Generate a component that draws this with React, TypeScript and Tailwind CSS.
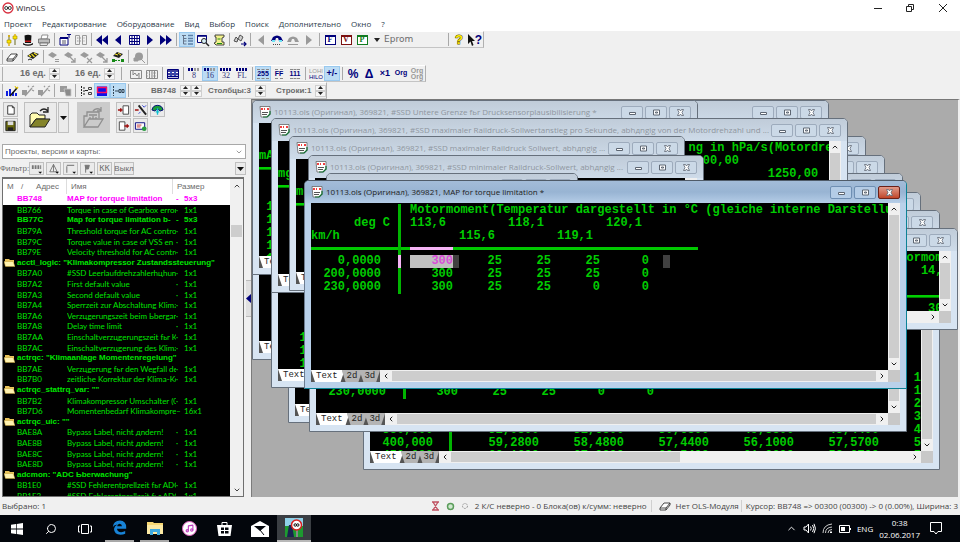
import type { ReactNode } from 'react'
import { ChevronDown, ChevronUp, ChevronLeft, ChevronRight, Search, Music } from 'lucide-react'

const menuItems = ['Проект', 'Редактирование', 'Оборудование', 'Вид', 'Выбор', 'Поиск', 'Дополнительно', 'Окно', '?']

type Row = { addr?: string; name: string; size?: string; mark?: string; bold?: boolean; selected?: boolean; group?: boolean }

const rows: Row[] = [
  { addr: 'BB748', name: 'MAP for torque limitation', size: '5x3', mark: '-', bold: true, selected: true },
  { addr: 'BB766', name: 'Torque in case of Gearbox error', size: '1x1' },
  { addr: 'BB77C', name: 'Map for torque limitation b-', size: '5x3', mark: '-', bold: true },
  { addr: 'BB79A', name: 'Threshold torque for AC control', size: '1x1' },
  { addr: 'BB79C', name: 'Torque value in case of VSS en', size: '1x1' },
  { addr: 'BB79E', name: 'Velocity threshold for AC control', size: '1x1' },
  { group: true, name: 'acctl_logic: "Klimakompressor Zustandssteuerung"' },
  { addr: 'BB7A0', name: '#SSD Leerlaufdrehzahlerhцhun', size: '1x1' },
  { addr: 'BB7A2', name: 'First default value', size: '1x1' },
  { addr: 'BB7A3', name: 'Second default value', size: '1x1' },
  { addr: 'BB7A4', name: 'Sperrzeit zur Abschaltung Klimal', size: '1x1' },
  { addr: 'BB7A6', name: 'Verzцgerungszeit beim Ьbergan', size: '1x1' },
  { addr: 'BB7A8', name: 'Delay time limit', size: '1x1' },
  { addr: 'BB7AA', name: 'Einschaltverzцgerungszeit fьr Kl', size: '1x1' },
  { addr: 'BB7AC', name: 'Einschaltverzцgerung des Klima', size: '1x1' },
  { group: true, name: 'actrqc: "Klimaanlage Momentenregelung"' },
  { addr: 'BB7AE', name: 'Verzцgerung fьr den Wegfall de', size: '1x1' },
  { addr: 'BB7B0', name: 'zeitliche Korrektur der Klima-Kor', size: '1x1' },
  { group: true, name: 'actrqc_stattrq_var: ""' },
  { addr: 'BB7B2', name: 'Klimakompressor Umschalter (0.', size: '1x1' },
  { addr: 'BB7D6', name: 'Momentenbedarf Klimakompres', size: '16x1', mark: '–' },
  { group: true, name: 'actrqc_uic: ""' },
  { addr: 'BAE8A', name: 'Bypass Label, nicht дndern!', size: '1x1' },
  { addr: 'BAE8B', name: 'Bypass Label, nicht дndern!', size: '1x1' },
  { addr: 'BAE8C', name: 'Bypass Label, nicht дndern!', size: '1x1' },
  { addr: 'BAE8D', name: 'Bypass Label, nicht дndern!', size: '1x1' },
  { group: true, name: 'adcmon: "ADC Ьberwachung"' },
  { addr: 'BB1E0', name: '#SSD Fehlerentprellzeit fьr ADC', size: '1x1' },
  { addr: 'BB1E2', name: '#SSD Fehlerentprellzeit fьr ADC', size: '1x1' },
]

const mapRows = [
  { rpm: '0,0000', values: ['300', '25', '25', '25', '0'] },
  { rpm: '200,0000', values: ['300', '25', '25', '25', '0'] },
  { rpm: '230,0000', values: ['300', '25', '25', '0', '0'] },
]

const fuelRows = [
  ['', '', '', '', '', '', '1'],
  ['', '', '', '', '', '', '1'],
  ['', '', '', '', '', '', '2'],
  ['', '', '', '', '', '', '3'],
  ['380,000', '52,0800', '51,6800', '50,6800', '49,8800', '48,4400', '4'],
  ['400,000', '59,2800', '58,4800', '57,4400', '56,1000', '57,5700', '5'],
  ['450,000', '60,1600', '67,0800', '60,5400', '61,0200', '58,6700', '5'],
]

/* ---------- toolbar icons, drawn on a 14x14 grid ---------- */

const N = '#00007b'
const G = '#9a9a9a'

function Ico({ children }: { children: ReactNode }) {
  return (
    <svg width="14" height="14" viewBox="0 0 14 14" fill="none" aria-hidden="true">
      {children}
    </svg>
  )
}

const icons = {
  plug: (
    <Ico>
      <path d="M4 2v6M10 6v6" stroke="#6b6b20" strokeWidth="1" />
      <path d="M2 7h4v3H2zM8 3h4v3H8z" fill="#ffe600" stroke="#9b8b00" strokeWidth=".6" />
      <path d="M4 10v3M10 1v2M3 3h2" stroke="#e0b000" strokeWidth="1.4" />
    </Ico>
  ),
  hat: (
    <Ico>
      <path d="M3.5 2.5Q7 1 10.500 2.500L10 10H4z" fill="#111" />
      <path d="M4 7.500h6v1.500H4z" fill="#c01818" />
      <path d="M2 10q5 3 10 0v1.500q-5 2.500-10 0z" fill="#111" />
    </Ico>
  ),
  printer: (
    <Ico>
      <path d="M5 2h6l-1 4H4z" fill="#fff" stroke="#777" strokeWidth=".8" />
      <path d="M1.500 6h11v4h-11z" fill="#bdbdbd" stroke="#666" strokeWidth=".8" />
      <path d="M3 10h8l-1 2.500H3z" fill="#e8e8e8" stroke="#666" strokeWidth=".8" />
    </Ico>
  ),
  props: (
    <Ico>
      <path d="M2 5h8v7H2z" fill="#fff" stroke={N} />
      <path d="M2 5h8" stroke={N} strokeWidth="2" />
      <path d="M4 8h4M4 10h4" stroke="#556" />
      <path d="M9 1.500h4M11 1v4" stroke={N} />
    </Ico>
  ),
  compare: (
    <Ico>
      <path d="M1.500 2.500h4v9h-4zM8.500 2.500h4v9h-4z" stroke={G} />
      <path d="M3 5h8M3 8h8" stroke={G} strokeDasharray="1.500 1" />
    </Ico>
  ),
  first: <Ico><path d="M7 2v10L1 7zM13 2v10L7 7z" fill={N} /></Ico>,
  prev: <Ico><path d="M10 2v10L4 7z" fill={N} /></Ico>,
  grid: (
    <Ico>
      <path d="M2.500 2.500h10v9h-10zM5 2.500v9M7.500 2.500v9M10 2.500v9M2.500 5.500h10M2.500 8.500h10" fill="#fff" stroke={N} />
    </Ico>
  ),
  next: <Ico><path d="M4 2v10l6-5z" fill={N} /></Ico>,
  last: <Ico><path d="M1 2v10l6-5zM7 2v10l6-5z" fill={N} /></Ico>,
  tree: (
    <Ico>
      <path d="M2 2.500h4M3.500 3v8M3.500 5.500h3M3.500 8h3M3.500 11h3" stroke="#64748b" />
      <path d="M8 5.500h5M8 8h5M8 11h5M8 2.500h5" stroke="#5b7fa8" strokeWidth="1.400" />
    </Ico>
  ),
  find: (
    <Ico>
      <path d="M1.500 2.500h9v7h-9z" fill="#fff" stroke={N} />
      <path d="M1.500 3h9" stroke={N} strokeWidth="1.500" />
      <circle cx="8" cy="8" r="2.500" fill="#d8f0f8" stroke="#222" />
      <path d="M10 10l3 3" stroke="#222" strokeWidth="1.500" />
    </Ico>
  ),
  scroll: (
    <Ico>
      <path d="M3 2h9v2l-2 1v4h2v3H4l-2-2 2-1V4H3z" fill="#f2f08a" stroke="#333" strokeWidth=".9" />
      <path d="M5.500 6h3M5 10.500h5" stroke="#198a19" />
    </Ico>
  ),
  handset: (
    <Ico>
      <path d="M1 8l2-4 2 2-1 3zM5 6l2-4 3 2-2 4z" stroke="#444" strokeWidth=".9" fill="#ccc" />
      <path d="M8 11h5M11 9l2 2-2 2" stroke={N} strokeWidth="1.200" />
    </Ico>
  ),
  prevG: <Ico><path d="M10 2v10L4 7z" fill={G} /></Ico>,
  nextG: <Ico><path d="M4 2v10l6-5z" fill={G} /></Ico>,
  bino: (
    <Ico>
      <path d="M1 8l2-4q4-3 8 0l2 4H9L8 5H6L5 8z" fill={N} />
      <path d="M2 7h3v2H2zM9 7h3v2H9z" fill="#6fe3f5" />
      <path d="M3 11.500h8" stroke="#444" strokeDasharray="1 1" />
    </Ico>
  ),
  binoG: (
    <Ico>
      <path d="M1 9l2-4q4-3 8 0l2 4H9L8 6H6L5 9z" fill={G} />
      <path d="M2 11.500h10" stroke={G} />
    </Ico>
  ),
  help: <b className="text-[13px] leading-none text-[#ffe800] [-webkit-text-stroke:1px_#555500] [paint-order:stroke_fill]">?</b>,
  cursorHelp: (
    <span className="flex items-center text-[12px] leading-none font-bold text-[#00007b]">
      <svg width="7" height="12" viewBox="0 0 7 12"><path d="M0 0v10l2.500-2.500L4 12l1.500-1L4 7h3z" fill="#111" /></svg>?
    </span>
  ),
  eraser: (
    <Ico>
      <path d="M2 9l4-5h6l-4 5zM2 9v2h6V9M8 11l4-5V4" fill="#fff" stroke="#333" strokeWidth=".9" />
    </Ico>
  ),
  chip: (
    <Ico>
      <path d="M1 6l6-4 6 2-6 5z" fill="#222" />
      <path d="M3 5l2 2M5.500 4l3 3M8 3l3 2" stroke="#f0e020" strokeWidth="1.200" />
      <path d="M2 10q2-2 4 0" stroke="#222" />
    </Ico>
  ),
  chipG: (
    <Ico>
      <path d="M1 5l4-3 5 3-4 3z" fill={G} />
      <path d="M8 9.500h4M8 11.500h4" stroke={G} strokeWidth="1.200" />
    </Ico>
  ),
  chipX: (
    <Ico>
      <path d="M1 5l4-3 5 3-4 3z" fill={G} />
      <path d="M8 8l5 5M13 8l-5 5" stroke={G} strokeWidth="1.200" />
    </Ico>
  ),
  chipArrow: (
    <Ico>
      <path d="M1 5l4-3 5 3-4 3z" fill={G} />
      <path d="M7 7l5 5M12 8v4H8" stroke={G} strokeWidth="1.300" />
    </Ico>
  ),
  chipGreen: (
    <Ico>
      <path d="M2 6l4-4 6 2-4 4z" fill="#222" />
      <path d="M4 4l3 1M7 3l3 2" stroke="#f0e020" />
      <path d="M1 9h3v3H1zM10 9h3v3h-3z" fill="#168a16" />
      <path d="M4 10.500h6" stroke="#168a16" strokeDasharray="2 1" />
    </Ico>
  ),
  blob: (
    <Ico>
      <circle cx="7" cy="6.500" r="4" fill={G} />
      <path d="M2 8h4v3H2zM9 9l4 4" fill={G} stroke={G} />
    </Ico>
  ),
  mapG: (
    <Ico>
      <path d="M1.500 3.500h11v8h-11z" stroke="#888" />
      <path d="M4 4v4l2-2 2 3 2-3v5" stroke="#888" />
    </Ico>
  ),
  mapG2: (
    <Ico>
      <path d="M1.500 3.500h11v8h-11zM4.500 3.500v8M7 3.500v8M9.500 3.500v8" stroke="#888" />
      <path d="M2 6h10M2 9h10" stroke="#aaa" strokeDasharray="1 1" />
    </Ico>
  ),
  table: (
    <Ico>
      <path d="M1.500 2.500h11v9h-11z" fill="#fff" stroke={N} />
      <path d="M1.500 4h11M1.500 7h11M1.500 9.500h11" stroke={N} strokeWidth="1.300" />
      <path d="M4 5.500h2M8 5.500h2M4 8.300h2M8 8.300h2" stroke="#3050c0" strokeWidth="1.300" />
    </Ico>
  ),
  bars: (
    <Ico>
      <path d="M1 7h2v5H1zM4 5h2v7H4zM7 8h2v4H7zM10 9h2v3h-2z" fill="#1020e0" />
      <path d="M5 12l7-8" stroke="#111" strokeWidth="1.500" />
      <path d="M10 2l1 2 2-1-1 2" stroke="#e0c000" />
    </Ico>
  ),
  wandG: (
    <Ico>
      <path d="M1 6h5v5H1z" fill={G} />
      <path d="M4 12l7-8M11 3l2-1M11 6l2 1M8 3L7 2" stroke={G} strokeWidth="1.300" />
    </Ico>
  ),
  stackG: (
    <Ico>
      <path d="M2 2h7v6H2z" fill={G} />
      <path d="M6 5h7v7H8z" fill="#8b8b8b" stroke="#c9c9c9" strokeWidth=".8" />
    </Ico>
  ),
  align: (
    <Ico>
      <path d="M2.500 2v10M5 3v8" stroke="#222" strokeDasharray="2 1" />
      <path d="M6 6.500h3" stroke="#222" />
      <path d="M9.500 3.500h3v2h-3zM9.500 8.500h3v2h-3z" stroke="#444" />
    </Ico>
  ),
  redbox: (
    <Ico>
      <path d="M2 2.500h10v9.500H2z" fill="#1010e8" />
      <path d="M2.500 3.500h9v5h-9z" stroke="#ff1060" strokeWidth="1.400" />
    </Ico>
  ),
  alignBlue: (
    <Ico>
      <path d="M2.500 2v10" stroke="#345" strokeDasharray="2 1" />
      <path d="M4 7h4" stroke="#345" />
      <path d="M8 5.500h2v3H8zM11 5.500h2v3h-2z" stroke="#345" />
    </Ico>
  ),
}

function Letter({ ch, cls }: { ch: string; cls: string }) {
  return (
    <span className={`flex h-[10px] w-[11px] items-center justify-center border-t-2 border-r border-b border-l bg-white font-['Liberation_Serif',serif] text-[8px] leading-none font-bold ${cls}`}>
      {ch}
    </span>
  )
}

function Bits({ label, gray }: { label: string; gray?: boolean }) {
  return (
    <span className="flex flex-col items-center font-['Liberation_Serif',serif] text-[8px] leading-[8px] text-[#33337b]">
      <svg width="12" height="4" viewBox="0 0 12 4" aria-hidden="true">
        <path d="M0 0h2v3H0zM3 0h2v3H3z" fill={N} />
        <path d="M6 0h2v3H6zM9 0h2v3H9z" fill={gray ? G : N} />
      </svg>
      {label}
    </span>
  )
}

function Digits({ label }: { label: string }) {
  return (
    <span className="flex flex-col items-center border-y border-dashed border-[#888888] text-[7px] leading-[8px] font-bold text-[#00007b]">
      {label}
    </span>
  )
}

function Tool({ name, on, children }: { name: string; on?: boolean; children: ReactNode }) {
  return (
    <button
      type="button"
      aria-label={name}
      className={`flex h-[15px] w-4 shrink-0 items-center justify-center overflow-hidden ${on ? 'bg-[#bcdcf4] outline outline-1 -outline-offset-1 outline-[#99c9ef]' : ''}`}
    >
      {children}
    </button>
  )
}

function Sep() {
  return (
    <span className="flex w-[5px] shrink-0 justify-center">
      <span className="h-[13px] w-px bg-[#a8a8a8]" />
    </span>
  )
}

function Toolbar({ children }: { children: ReactNode }) {
  return (
    <div className="flex h-[17px] w-fit items-center border-t border-r border-b border-t-white border-r-[#b0b0b0] border-b-[#c4c4c4]">
      <span className="mr-px ml-[2px] h-[14px] w-px shrink-0 bg-[#b0b0b0]" />
      {children}
    </div>
  )
}

function Spinner({ name }: { name: string }) {
  return (
    <span className="flex w-[11px] flex-col">
      <button type="button" aria-label={`${name} +`} className="flex h-[6px] items-center justify-center border border-[#cfcfcf] bg-[#f6f6f6]">
        <svg width="5" height="3" viewBox="0 0 5 3"><path d="M0 3l2.500-3L5 3z" fill="#222" /></svg>
      </button>
      <button type="button" aria-label={`${name} -`} className="flex h-[6px] items-center justify-center border border-[#cfcfcf] bg-[#f6f6f6]">
        <svg width="5" height="3" viewBox="0 0 5 3"><path d="M0 0l2.500 3L5 0z" fill="#222" /></svg>
      </button>
    </span>
  )
}

function Toolbars() {
  return (
    <div className="bg-[#f0f0f0] font-['Liberation_Sans',sans-serif] text-[9px] text-[#6b6b6b]">
      <Toolbar>
        <Tool name="Подключить">{icons.plug}</Tool>
        <Tool name="Мастер">{icons.hat}</Tool>
        <Tool name="Печать">{icons.printer}</Tool>
        <Sep />
        <Tool name="Свойства">{icons.props}</Tool>
        <Tool name="Сравнить">{icons.compare}</Tool>
        <Sep />
        <Tool name="Первая">{icons.first}</Tool>
        <Tool name="Назад">{icons.prev}</Tool>
        <Tool name="Таблица">{icons.grid}</Tool>
        <Tool name="Вперед">{icons.next}</Tool>
        <Tool name="Последняя">{icons.last}</Tool>
        <Sep />
        <Tool name="Дерево" on>{icons.tree}</Tool>
        <Tool name="Просмотр">{icons.find}</Tool>
        <Tool name="Сценарий">{icons.scroll}</Tool>
        <Sep />
        <Tool name="Добавить">{icons.handset}</Tool>
        <Sep />
        <Tool name="Найти назад">{icons.prevG}</Tool>
        <Tool name="Найти">{icons.bino}</Tool>
        <Tool name="Найти еще">{icons.binoG}</Tool>
        <Tool name="Найти вперед">{icons.nextG}</Tool>
        <Sep />
        <Tool name="F"><Letter ch="F" cls="border-[#00007b] text-[#00007b]" /></Tool>
        <Tool name="V"><Letter ch="V" cls="border-[#7b1010] text-[#7b1010]" /></Tool>
        <Tool name="P"><Letter ch="P" cls="border-[#107b20] text-[#107b20]" /></Tool>
        <button type="button" aria-label="Тип" className="flex w-[14px] justify-center">
          <svg width="6" height="4" viewBox="0 0 6 4"><path d="M0 0h6L3 4z" fill="#222" /></svg>
        </button>
        <span className="w-[62px] font-['DejaVu_Sans',sans-serif]">Eprom</span>
        <Sep />
        <Tool name="Справка">{icons.help}</Tool>
        <Tool name="Что это">{icons.cursorHelp}</Tool>
      </Toolbar>
      <Toolbar>
        <Tool name="Стереть">{icons.eraser}</Tool>
        <Sep />
        <Tool name="Модуль">{icons.chip}</Tool>
        <Sep />
        <Tool name="Читать">{icons.chipG}</Tool>
        <Tool name="Отправить">{icons.chipArrow}</Tool>
        <Tool name="Удалить">{icons.chipX}</Tool>
        <Tool name="Записать">{icons.chipArrow}</Tool>
        <Tool name="Эмулятор">{icons.chipGreen}</Tool>
        <Sep />
        <Tool name="Диагностика">{icons.blob}</Tool>
      </Toolbar>
      <Toolbar>
        <span className="flex w-[115px] items-center justify-between pr-1 pl-4 font-bold">
          <span>16 ед.</span>
          <Spinner name="Ширина" />
          <span className="pl-3">16 ед.</span>
          <Spinner name="Шаг" />
        </span>
        <Sep />
        <span className="w-1" />
        <Tool name="Карта">{icons.mapG}</Tool>
        <Tool name="Карты">{icons.mapG2}</Tool>
        <Sep />
        <Tool name="Окно карт">{icons.table}</Tool>
        <Sep />
        <Tool name="8 бит"><Bits label="8" gray /></Tool>
        <Tool name="16 бит" on><Bits label="16" gray /></Tool>
        <Tool name="32 бит"><Bits label="32" /></Tool>
        <Tool name="Float"><Bits label="FL" /></Tool>
        <Sep />
        <Tool name="Десятичный" on><Digits label="255" /></Tool>
        <Tool name="Шестнадцатеричный"><Digits label="FF" /></Tool>
        <Tool name="Двоичный"><Digits label="111" /></Tool>
        <Sep />
        <Tool name="Порядок байт">
          <span className="text-[6px] leading-[6px]"><span className="block text-[#999999]">LOHI</span><span className="block text-[#00007b]">HILO</span></span>
        </Tool>
        <Tool name="Знак" on><b className="text-[9px] text-[#00007b]">+/-</b></Tool>
        <Sep />
        <Tool name="Процент"><b className="text-[12px] leading-none text-[#00007b]">%</b></Tool>
        <Tool name="Разница"><b className="text-[12px] leading-none text-[#00007b]">Δ</b></Tool>
        <Tool name="Множитель"><b className="text-[9px] text-[#00007b]">×1</b></Tool>
        <Tool name="Оригинал"><b className="text-[7px] text-[#00007b]">Org</b></Tool>
        <Tool name="Оригиналы">
          <b className="text-[7px] leading-[6px] text-[#999999]"><span className="block">Org</span><span className="block">Org</span></b>
        </Tool>
      </Toolbar>
      <Toolbar>
        <Tool name="Гистограмма">{icons.bars}</Tool>
        <Tool name="Правка">{icons.wandG}</Tool>
        <Tool name="Правка 2">{icons.wandG}</Tool>
        <Sep />
        <Tool name="Слои">{icons.stackG}</Tool>
        <Sep />
        <Tool name="Привязка">{icons.align}</Tool>
        <Tool name="Выделение" on>{icons.redbox}</Tool>
        <Tool name="Строка" on>{icons.alignBlue}</Tool>
        <Sep />
        <span className="flex items-center pl-5 text-[8px] font-bold">
          <span className="mr-1">BB748</span>
          <Spinner name="Адрес" />
          <Spinner name="Сдвиг" />
          <span className="mr-1 ml-[6px]">Столбцы:3</span>
          <Spinner name="Столбцы" />
          <span className="mr-1 ml-[10px]">Строки:1</span>
          <Spinner name="Строки" />
        </span>
      </Toolbar>
    </div>
  )
}

/* ---------- left panel ---------- */

function PanelButton({ name, size = 'h-[15px] w-[15px]', children }: { name: string; size?: string; children: ReactNode }) {
  return (
    <button type="button" aria-label={name} className={`flex shrink-0 items-center justify-center border border-[#c0c0c0] bg-[#ebebeb] ${size}`}>
      {children}
    </button>
  )
}

function Folder() {
  return (
    <svg width="11" height="9" viewBox="0 0 11 9" className="ml-px" aria-hidden="true">
      <path d="M1 1h4l1 1h4v6H1z" fill="#e8c25a" />
      <path d="M0 3.500h9l2 5H1.500z" fill="#fff2b0" stroke="#c09a30" strokeWidth=".5" />
    </svg>
  )
}

const listCols = 'grid grid-cols-[14px_50px_109px_8px_minmax(0,1fr)]'

function MapList() {
  return (
    <div className="mr-[2px] ml-[2px] flex min-h-0 flex-1 border-t-2 border-r border-b border-l border-[#6f6f6f] bg-black">
      <table className="flex min-w-0 flex-1 flex-col overflow-hidden text-[8px]">
        <thead className="block shrink-0 bg-white text-[#6b6b6b]">
          <tr className="grid h-[15px] grid-cols-[14px_49px_106px_minmax(0,1fr)] items-center text-left">
            <th className="pl-1 font-normal">M</th>
            <th className="flex justify-between pr-[7px] pl-1 font-normal"><span>/</span><span>Адрес</span></th>
            <th className="flex h-full items-center border-l border-[#dddddd] pl-1 font-normal">Имя</th>
            <th className="flex h-full items-center border-l border-[#dddddd] pl-1 font-normal">Размер</th>
          </tr>
        </thead>
        <tbody className="-mb-[5px] flex min-h-0 flex-1 flex-col text-[#00e400]">
          {rows.map((row, i) =>
            row.group ? (
              <tr key={i} className="flex min-h-0 flex-1 items-center overflow-hidden leading-[10px] font-bold whitespace-nowrap">
                <td className="w-[14px] shrink-0"><Folder /></td>
                <td>{row.name}</td>
              </tr>
            ) : (
              <tr
                key={i}
                className={`${listCols} min-h-0 flex-1 items-center leading-[10px] whitespace-nowrap ${
                  row.bold ? 'font-bold' : "font-['Lato','Liberation_Sans',sans-serif]"
                } ${row.selected ? 'bg-white text-[#ff00ff]' : ''}`}
              >
                <td />
                <td>{row.addr}</td>
                <td className="overflow-hidden">{row.name}</td>
                <td>{row.mark ?? '·'}</td>
                <td>{row.size}</td>
              </tr>
            ),
          )}
        </tbody>
      </table>
      <div className="flex w-[13px] shrink-0 flex-col items-center bg-[#f0f0f0] text-[#444444]">
        <button type="button" aria-label="Вверх" className="flex h-[13px] items-center"><ChevronUp size={8} strokeWidth={3} /></button>
        <span className="mt-[33px] h-[12px] w-[11px] bg-[#cdcdcd]" />
        <button type="button" aria-label="Вниз" className="mt-auto flex h-[13px] items-center"><ChevronDown size={8} strokeWidth={3} /></button>
      </div>
    </div>
  )
}

function SidePanel() {
  return (
    <aside className="flex w-[252px] shrink-0 bg-[#f0f0f0]">
      <div className="flex min-w-0 flex-1 flex-col font-['Liberation_Sans',sans-serif] text-[8px] text-[#6b6b6b]">
        <div className="flex gap-[6px] pt-[3px] pl-[3px]">
          <div className="flex flex-col gap-px">
            <PanelButton name="Новый">
              <Ico><path d="M4 2.500h5l2 2v7H4z" fill="#fff" stroke="#333" /><path d="M9 2.500v2h2" stroke="#333" /></Ico>
            </PanelButton>
            <PanelButton name="Сохранить">
              <Ico><path d="M2 2h10v10H2z" fill="#6b6b10" stroke="#222" /><path d="M4 2h6v4H4z" fill="#ddd" /><path d="M4 8.500h6V12H4z" fill="#222" /></Ico>
            </PanelButton>
          </div>
          <div className="flex gap-px">
            <PanelButton name="Открыть" size="h-[31px] w-[33px]">
              <svg width="26" height="24" viewBox="0 0 26 24" aria-hidden="true">
                <path d="M2 21V9l2-2h5l2 2h6v4H8z" fill="#fffbb0" stroke="#222" />
                <path d="M2 21l6-8h14l-5 8z" fill="#84842a" stroke="#222" />
                <path d="M12 5q4-4 8 0M20 1v5h-5" stroke="#222" fill="none" strokeWidth="1.300" />
              </svg>
            </PanelButton>
            <PanelButton name="Последние файлы" size="h-[31px] w-[11px]">
              <svg width="7" height="4" viewBox="0 0 7 4"><path d="M0 0h7L3.500 4z" fill="#111" /></svg>
            </PanelButton>
          </div>
          <button type="button" disabled aria-label="Импорт" className="ml-[2px] flex h-[31px] w-[33px] items-center justify-center bg-[#cbcbcb]">
            <svg width="26" height="24" viewBox="0 0 26 24" aria-hidden="true" fill="none" stroke="#8f8f8f" strokeWidth="1.300">
              <path d="M3 21V10h3V6h12v6M3 21l5-8h14l-5 8z" />
              <path d="M8 9h8M12 5q3-4 8-1M20 1v4h-4M9 11v2M12 10v3M15 11v2" />
            </svg>
          </button>
          <div className="grid grid-cols-3 gap-x-[2px] gap-y-px">
            <PanelButton name="Импорт файла">
              <Ico><path d="M6.500 2.500h6v9h-6z" fill="#fff" stroke="#444" /><path d="M1 7h5M4 5v4" stroke="#a01010" strokeWidth="1.600" /></Ico>
            </PanelButton>
            <PanelButton name="Мастер импорта">
              <Ico><path d="M5 2l8 10" stroke="#222" strokeWidth="2" /><path d="M1 7h4" stroke="#a01010" strokeWidth="1.600" /><path d="M9 2l2 2 2-2M5 11l2-2" stroke="#3040d0" /></Ico>
            </PanelButton>
            <PanelButton name="Онлайн">
              <Ico><path d="M1 7q1-5 6-5t6 5l-3 1-3-2-3 2z" fill="#1a9c3a" stroke={N} /><path d="M7 5v7M5 9h4" stroke="#10c0d0" strokeWidth="1.500" /></Ico>
            </PanelButton>
            <PanelButton name="Экспорт файла">
              <Ico><path d="M2.500 2.500h6v9h-6z" fill="#fff" stroke="#444" /><path d="M8 7h5M11 5v4" stroke="#a01010" strokeWidth="1.600" /></Ico>
            </PanelButton>
            <PanelButton name="Отправить">
              <Ico><path d="M1.500 3.500h10v7h-10z" fill="#fff" stroke={N} /><path d="M3 6h5M3 8h4" stroke="#c03030" /><circle cx="11" cy="10" r="2.500" fill="#2b9c40" /></Ico>
            </PanelButton>
          </div>
        </div>
        <div className="relative mt-[11px] ml-[2px] h-[15px]">
          <select aria-label="Проекты, версии и карты" className="h-full w-full appearance-none border border-[#a8a8a8] bg-white px-[2px] text-[8px] leading-none">
            <option>Проекты, версии и карты:</option>
          </select>
          <ChevronDown size={8} className="pointer-events-none absolute top-1 right-[3px]" />
        </div>
        <div className="mt-[3px] mb-[2px] flex h-[13px] items-center gap-[2px]">
          <span className="w-[27px] text-[8px]">Фильтр:</span>
          <PanelButton name="Фильтр карт" size="h-[13px] w-[15px]"><Ico><path d="M2 4h10M2 6h10" stroke="#777" strokeDasharray="2 1" strokeWidth="2" /><path d="M9 10h4l-2 2z" fill="#111" /></Ico></PanelButton>
          <PanelButton name="Изменения" size="h-[13px] w-[15px]"><Ico><path d="M7 2l4 8H3zM7 2v8" stroke="#777" /><path d="M9 10h4l-2 2z" fill="#111" /></Ico></PanelButton>
          <PanelButton name="Инфо" size="h-[13px] w-[15px]"><Ico><path d="M3 4v7M3 3h8" stroke="#888" strokeWidth="1.300" /><path d="M9 10h4l-2 2z" fill="#111" /></Ico></PanelButton>
          <PanelButton name="Флаг" size="h-[13px] w-[15px]"><Ico><path d="M4 3h5l-1 4H5v4" fill="#777" stroke="#777" /><path d="M9 10h4l-2 2z" fill="#111" /></Ico></PanelButton>
          <PanelButton name="КК" size="h-[13px] w-[15px]"><span className="text-[9px] leading-none">КК</span></PanelButton>
          <PanelButton name="Выкл" size="h-[13px] w-[20px]"><span className="text-[8px] leading-none">Выкл</span></PanelButton>
          <span className="ml-auto"><PanelButton name="Еще" size="h-[13px] w-[11px]"><svg width="7" height="4" viewBox="0 0 7 4"><path d="M0 0h7L3.500 4z" fill="#111" /></svg></PanelButton></span>
        </div>
        <MapList />
      </div>
      <div className="flex w-[6px] shrink-0 items-center border-r border-[#7b7b7b]">
        <button type="button" aria-label="Свернуть панель" className="flex h-[37px] w-full items-center border-y border-[#bbbbbb] bg-[#e0e0e0]">
          <svg width="5" height="9" viewBox="0 0 5 9"><path d="M5 0v9L0 4.500z" fill={N} /></svg>
        </button>
      </div>
    </aside>
  )
}

/* ---------- child windows ---------- */

function DocIcon() {
  return (
    <svg width="12" height="12" viewBox="0 0 12 12" aria-hidden="true" className="shrink-0">
      <path d="M1 .5h10v8L8.500 11H2z" fill="#fff" stroke="#666" strokeWidth=".8" />
      <path d="M2 2h2v2H2zM5 2h1v2H5zM8 2h2v2H8z" fill="#f04040" />
      <path d="M3 6.500h6M3 8.500h5" stroke="#555" />
      <path d="M11 5v3l-3 3H4" stroke="#107030" fill="none" strokeWidth="1.200" />
    </svg>
  )
}

function CaptionButton({ name, cls, children }: { name: string; cls: string; children: ReactNode }) {
  return (
    <button type="button" aria-label={name} className={`flex h-[13px] w-[22px] shrink-0 items-center justify-center rounded-[2px] border ${cls}`}>
      <svg width="9" height="7" viewBox="0 0 9 7" fill="#fff" stroke="#5d6672">{children}</svg>
    </button>
  )
}

function Tab({ label, on }: { label: string; on?: boolean }) {
  return (
    <button
      type="button"
      className={`-ml-[3px] h-full px-[5px] leading-none first:ml-0 [clip-path:polygon(0_0,100%_0,calc(100%-4px)_100%,4px_100%)] ${on ? 'bg-white pr-[7px]' : 'bg-[#b4b4b4]'}`}
    >
      {label}
    </button>
  )
}

function Win({ title, place, active, hbar = 'flex-1', children }: { title?: string; place: string; active?: boolean; hbar?: string; children?: ReactNode }) {
  const button = active ? 'border-[#6f8fb3] bg-[#b4cce6]' : 'border-[#9dabbc] bg-[#cbd9e7]'
  return (
    <section
      className={`absolute flex flex-col overflow-hidden rounded-t-[5px] border px-[6px] pb-[6px] ${place} ${
        active ? 'border-t-[#4f5b68] border-r-[#0c8296] border-b-[#0c8296] border-l-[#6d7d90] bg-[#b9d1ea]' : 'border-[#66707c] bg-[#d7e4f2]'
      }`}
    >
      <header
        className={`-mx-[6px] flex h-[22px] shrink-0 items-center gap-[2px] px-[6px] ${
          active ? 'bg-linear-to-b from-[#a3bcd8] via-[#98b4d3] to-[#b5cde7] text-[#222222]' : 'bg-linear-to-b from-[#c0ccd9] to-[#cedbe9] text-[#8f969e]'
        }`}
      >
        {title && <DocIcon />}
        <h2 className="min-w-0 flex-1 truncate pl-px text-[8px]">{title}</h2>
        <CaptionButton name="Свернуть" cls={button}><path d="M1.500 3.500h6v2h-6z" /></CaptionButton>
        <CaptionButton name="Развернуть" cls={button}><path d="M1.500 1h6v5h-6zM3.500 3h2v1h-2z" /></CaptionButton>
        <CaptionButton name="Закрыть" cls={active ? 'border-[#6b2018] bg-linear-to-b from-[#e09a8a] to-[#c04428]' : button}>
          <path d="M1.500.5h2l1 1.500 1-1.500h2l-1.500 3 1.500 3h-2l-1-1.500-1 1.500h-2L3 3.500z" strokeWidth=".8" />
        </CaptionButton>
      </header>
      <div className="flex min-h-0 flex-1">
        <div className="min-w-0 flex-1 overflow-hidden bg-black pt-px font-['Liberation_Mono',monospace] text-[12px] leading-[13px] font-bold text-[#00cc00]">{children}</div>
        <div className="flex w-[12px] shrink-0 flex-col items-center bg-[#f0f0f0] text-[#222222]">
          <button type="button" aria-label="Вверх" className="flex h-[12px] items-center"><ChevronUp size={8} strokeWidth={3} /></button>
          <span className="w-[10px] flex-1 bg-[#cdcdcd]" />
          <button type="button" aria-label="Вниз" className="flex h-[12px] items-center"><ChevronDown size={8} strokeWidth={3} /></button>
        </div>
      </div>
      <div className="flex h-[12px] shrink-0 bg-[#f0f0f0] text-[#222222]">
        <div className="flex shrink-0 bg-[#555555] font-['Liberation_Mono',monospace] text-[9px]">
          <Tab label="Text" on />
          <Tab label="2d" />
          <Tab label="3d" />
        </div>
        <button type="button" aria-label="Влево" className="flex w-[12px] shrink-0 items-center justify-center"><ChevronLeft size={8} strokeWidth={3} /></button>
        <span className={`my-px bg-[#cdcdcd] ${hbar}`} />
        <button type="button" aria-label="Вправо" className="ml-auto flex w-[12px] shrink-0 items-center justify-center"><ChevronRight size={8} strokeWidth={3} /></button>
        <span className="w-[12px] shrink-0 bg-[#c8c8c8]" />
      </div>
    </section>
  )
}

function Lines({ head, body = [] }: { head: string[]; body?: string[] }) {
  return (
    <>
      <pre className="h-[43px] overflow-hidden font-[inherit]">{head.join('\n')}</pre>
      <div className="mb-[5px] h-[3px] border-b border-[#008000] bg-[#00d000]" />
      <pre className="font-[inherit]">{body.join('\n')}</pre>
    </>
  )
}

function TorqueMap({ cursor }: { cursor?: boolean }) {
  const axis = 'border-r-[3px] border-[#00b400] p-0 font-bold'
  return (
    <table className="w-[387px] table-fixed border-separate border-spacing-0">
      <colgroup>
        <col className="w-[90px]" />
        <col className="w-[58px]" />
        <col className="w-[49px]" />
        <col className="w-[49px]" />
        <col className="w-[49px]" />
        <col className="w-[49px]" />
        <col className="w-[43px]" />
      </colgroup>
      <thead className="text-left whitespace-nowrap">
        <tr className="h-[13px]">
          <th className={axis} />
          <th colSpan={6} className="p-0 pl-[9px] font-bold">Motormoment(Temperatur dargestellt in °C (gleiche interne Darstellun</th>
        </tr>
        <tr className="h-[13px]">
          <th className={`${axis} pr-2 text-right`}>deg C</th>
          <th className="p-0 pl-[9px] font-bold">113,6</th>
          <th className="p-0" />
          <th className="p-0 font-bold">118,1</th>
          <th className="p-0" />
          <th className="p-0 font-bold">120,1</th>
          <th className="p-0" />
        </tr>
        <tr className="h-[17px] align-top">
          <th className={axis}>km/h</th>
          <th className="p-0" />
          <th className="p-0 font-bold">115,6</th>
          <th className="p-0" />
          <th className="p-0 font-bold">119,1</th>
          <th className="p-0" />
          <th className="p-0" />
        </tr>
        <tr className="h-[3px] bg-[#00c800]">
          <th className={axis} />
          <th className="p-0 pr-[6px] pl-[9px]">{cursor && <span className="block h-[3px] bg-[#f5b4f5]" />}</th>
          <th colSpan={5} className="p-0" />
        </tr>
        <tr className="h-[5px]">
          <th className={axis} />
          <th colSpan={6} className="p-0" />
        </tr>
      </thead>
      <tbody className="text-right">
        {mapRows.map((row, r) => {
          const here = cursor && r === 0
          return (
            <tr key={row.rpm} className="h-[13px]">
              <th className={`border-r-[3px] p-0 pr-[17px] font-bold ${here ? 'border-[#f5b4f5]' : 'border-[#00b400]'}`}>{row.rpm}</th>
              {row.values.map((value, c) => (
                <td key={c} className={c === 0 ? 'p-0 pl-[9px]' : 'p-0 pr-[6px]'}>
                  {c === 0 ? (
                    <span className={`block border-r-[6px] ${here ? 'border-[#404040] bg-[#c0c0c0] text-[#d850d8]' : 'border-transparent'}`}>{value}</span>
                  ) : (
                    value
                  )}
                </td>
              ))}
              <td className="p-0 pl-2">{here && <span className="block h-[13px] w-[7px] bg-[#404040]" />}</td>
            </tr>
          )
        })}
      </tbody>
    </table>
  )
}

function FuelMap() {
  return (
    <table className="mt-[138px] table-fixed border-separate border-spacing-0 text-right">
      <tbody>
        {fuelRows.map((row, i) => (
          <tr key={i} className="h-[13px]">
            <th className="w-[82px] border-r-[3px] border-[#00b400] p-0 pr-[16px] font-bold">{row[0]}</th>
            <td className="w-[87px] p-0">{row[1]}</td>
            <td className="w-[85px] p-0">{row[2]}</td>
            <td className="w-[85px] p-0">{row[3]}</td>
            <td className="w-[85px] p-0">{row[4]}</td>
            <td className="w-[85px] p-0">{row[5]}</td>
            <td className="w-[42px] p-0">{row[6]}</td>
          </tr>
        ))}
      </tbody>
    </table>
  )
}

function Desktop() {
  const ones = ['', '', ' 1', ' 1', ' 1', ' 1', ' 1']
  return (
    <main className="relative min-w-0 flex-1 overflow-hidden border-t border-r-2 border-t-[#777777] border-r-[#f0f0f0] bg-[#ababab] font-['Open_Sans',sans-serif]">
      {/* back to front */}
      <Win place="left-0 top-0 h-[260px] w-[577px]" />
      <Win place="left-[36px] top-[140px] h-[183px] w-[577px]" />
      <Win place="left-[37px] top-[36px] h-[170px] w-[577px]" />
      <Win place="left-[56px] top-[55px] h-[170px] w-[577px]" />
      <Win place="left-[74px] top-[73px] h-[170px] w-[577px]" />
      <Win place="left-[92px] top-[92px] h-[170px] w-[577px]" />
      <Win place="left-[111px] top-[110px] h-[260px] w-[577px]" hbar="w-[229px]">
        <FuelMap />
      </Win>
      <Win place="left-[129px] top-[128px] h-[102px] w-[577px]" hbar="w-[229px]">
        <Lines head={['Motormoment'.padStart(80), '14,10'.padStart(79), '']} body={['0   30'.padStart(77)]} />
      </Win>
      <Win title="10113.ols (Оригинал), 369821, #SSD Untere Grenze fьr Drucksensorplausibilisierung *" place="left-0 top-0 h-[175px] w-[446px]">
        <Lines head={['', '', 'mA']} body={ones} />
      </Win>
      <Win place="left-[19px] top-[105px] h-[183px] w-[577px]">
        <Lines head={['', '', '']} body={['', '', '', '', '   1', '   1', '   1']} />
      </Win>
      <Win
        title="10113.ols (Оригинал), 369821, #SSD maximaler Raildruck-Sollwertanstieg pro Sekunde, abhдngig von der Motordrehzahl und ..."
        place="left-[19px] top-[18px] h-[175px] w-[577px]"
      >
        <Lines head={[' '.repeat(57) + 'ng in hPa/s(Motordreh', ' '.repeat(59) + '00,00', 'mg'.padEnd(68) + '1250,00']} />
      </Win>
      <Win title="10113.ols (Оригинал), 369821, #SSD maximaler Raildruck Sollwert, abhдngig v..." place="left-[37px] top-[36px] h-[155px] w-[396px]">
        <Lines head={['', '', 'mg']} />
      </Win>
      <Win title="10113.ols (Оригинал), 369821, #SSD minimaler Raildruck-Sollwert, abhдngig ..." place="left-[56px] top-[55px] h-[170px] w-[396px]" />
      <Win place="left-[74px] top-[73px] h-[100px] w-[252px]" />
      <Win place="left-[57px] top-[185px] h-[147px] w-[598px]">
        <TorqueMap />
      </Win>
      <Win active title="10113.ols (Оригинал), 369821, MAP for torque limitation *" place="left-[52px] top-[80px] h-[209px] w-[603px]">
        <TorqueMap cursor />
      </Win>
    </main>
  )
}

/* ---------- status bar and taskbar ---------- */

function StatusBar() {
  return (
    <footer className="flex h-[18px] shrink-0 items-center bg-[#f0f0f0] px-[2px] text-[8px] text-[#444444]">
      <span className="flex-1">Выбрано: 1</span>
      <svg width="9" height="10" viewBox="0 0 9 10" className="mr-[6px]"><path d="M1 1h7M1 9h7M2 1l5 8M7 1L2 9" stroke="#c05060" strokeWidth="1.300" fill="none" /></svg>
      <svg width="9" height="9" viewBox="0 0 9 9" className="mr-[6px]"><circle cx="4.500" cy="4.500" r="3" fill="#cfe8cf" stroke="#5a9c5a" strokeWidth="1.500" /></svg>
      <svg width="8" height="8" viewBox="0 0 8 8" className="mr-[6px]"><circle cx="4" cy="4" r="2.500" fill="none" stroke="#999" strokeDasharray="2 1" /></svg>
      <span className="border-r border-[#d0d0d0] pr-1">2 К/С неверно - 0 Блока(ов) к/сумм: неверно</span>
      <span className="mr-1 ml-[6px]">{icons.eraser}</span>
      <span className="border-r border-[#d0d0d0] pr-[2px]">Нет OLS-Модуля</span>
      <span className="pl-1">Курсор: BB748 =&gt; 00300 (00300) -&gt; 0 (0.00%), Ширина: 3</span>
    </footer>
  )
}

function Task({ name, cls = 'w-[35px]', children }: { name: string; cls?: string; children: ReactNode }) {
  return (
    <button type="button" aria-label={name} className={`flex h-full shrink-0 items-center justify-center ${cls}`}>
      {children}
    </button>
  )
}

function Taskbar() {
  return (
    <nav className="flex h-[27px] shrink-0 items-center bg-[#03060c] text-[9px] text-white">
      <Task name="Пуск" cls="w-[34px]">
        <svg width="12" height="12" viewBox="0 0 12 12" fill="#fff"><path d="M0 1.700L5 1v4.600H0zM5.700.9L12 0v5.600H5.700zM0 6.400h5V11l-5-.7zM5.700 6.400H12V12l-6.300-.9z" /></svg>
      </Task>
      <Task name="Поиск" cls="w-[34px]"><Search size={12} className="-scale-x-100" /></Task>
      <Task name="Представление задач" cls="w-[34px]">
        <svg width="14" height="10" viewBox="0 0 14 10" fill="none" stroke="#fff"><path d="M3.500 .5h7v9h-7zM2 2H.5v6H2M12 2h1.500v6H12" /></svg>
      </Task>
      <Task name="Edge" cls="mx-[3px] w-[29px] border-b-2 border-[#a8a8a8]">
        <svg width="15" height="15" viewBox="0 0 15 15"><path d="M.8 7Q1.500.5 8 .5q6.200.3 6.200 7v1.300H5q.4 3.300 4.200 3.400 2.200 0 4-1.100v2.700Q11.300 14.700 8.500 14.700 2.200 14.600 2 9q.2-3 3.300-4.600Q2.300 4.800.8 7zM5.100 6.300h4.900Q9.800 3.700 7.600 3.700 5.400 3.900 5.100 6.300z" fill="#1883d7" /></svg>
      </Task>
      <Task name="Проводник" cls="mx-[3px] w-[29px] border-b-2 border-[#a8a8a8]">
        <svg width="16" height="14" viewBox="0 0 16 14"><path d="M0 1h6l1 1h9v11H0z" fill="#f7d774" /><path d="M0 4h16v9H0z" fill="#fce9a4" /><path d="M3 14V8h10v6h-3v-3H6v3z" fill="#3fa9e0" /></svg>
      </Task>
      <Task name="iTunes">
        <span className="flex h-[15px] w-[15px] items-center justify-center rounded-full border border-[#e060c0] bg-white"><Music size={9} color="#c040c0" strokeWidth={3} /></span>
      </Task>
      <Task name="Магазин">
        <svg width="15" height="15" viewBox="0 0 15 15"><path d="M5 4V1.500h5V4" stroke="#fff" fill="none" /><path d="M0 4h15l-1.500 11h-12z" fill="#fff" /><path d="M4 6.500h3v2.500H4zM8 6.500h3.500V9H8zM4 10h3v2.500H4zM8 10h3.500v2.500H8z" fill="#03060c" /></svg>
      </Task>
      <Task name="Почта">
        <svg width="18" height="16" viewBox="0 0 18 16"><path d="M0 5l9-5 9 5v11H0z" fill="#fff" /><path d="M3 5h12l-6 5z" fill="#03060c" /><path d="M9 9l4 5" stroke="#03060c" /></svg>
      </Task>
      <Task name="WinOLS" cls="w-[34px] border-b-2 border-[#b8b8b8] bg-[#3a3e43]">
        <svg width="18" height="19" viewBox="0 0 18 19">
          <path d="M0 0h18v19H0z" fill="#8fd0e8" /><path d="M0 8h18v11H0z" fill="#1d9a30" /><path d="M2 19l2-12h3l2 12z" fill="#1a2350" />
          <path d="M12 12v7" stroke="#888" strokeWidth="2" /><circle cx="11.500" cy="7" r="5" fill="#fff" stroke="#d82020" strokeWidth="1.500" />
          <path d="M9 7a1.200 1.200 0 1 0 2.500 0 1.200 1.200 0 1 0 2.500 0 1.200 1.200 0 1 0-2.500 0 1.200 1.200 0 1 0-2.500 0" fill="none" stroke="#111" />
        </svg>
      </Task>
      <div className="ml-auto flex items-center gap-[6px] pr-[14px] font-['Open_Sans',sans-serif] text-[8px]">
        <ChevronUp size={11} />
        <svg width="13" height="11" viewBox="0 0 13 11" fill="none" stroke="#fff"><path d="M1 4h2l2.500-3v9L3 7H1zM7.500 3.500q1.500 2 0 4M9.500 2q2.500 3.500 0 7M11 .8q3 4.700 0 9.400" /></svg>
        <svg width="11" height="11" viewBox="0 0 11 11" fill="none" stroke="#ccc"><path d="M1 10Q1 2 10 1M3.500 10Q3.500 4.500 10 4M6 10q0-3.500 4-3.500" /><path d="M8 8.500h2V10H8z" fill="#fff" stroke="none" /></svg>
        <svg width="12" height="8" viewBox="0 0 12 8"><path d="M.5 .5h10v7H.5z" fill="none" stroke="#fff" /><path d="M2 2h4v4H2zM11 3h1v2h-1z" fill="#fff" /></svg>
        <span>ENG</span>
        <div className="text-center leading-[12px]">
          <div>0:38</div>
          <div>02.06.2017</div>
        </div>
        <svg width="12" height="13" viewBox="0 0 12 13" className="mx-1" fill="none" stroke="#fff"><path d="M.5 .5h11v9H8l-2 2.500-2-2.500H.5z" /></svg>
      </div>
    </nav>
  )
}

export default function App() {
  return (
    <div className="flex h-screen flex-col overflow-hidden bg-[#f0f0f0] font-['Open_Sans',sans-serif]">
      <header className="flex h-4 shrink-0 items-center bg-white pl-[2px] text-[8px] text-[#222222]">
        <svg width="12" height="12" viewBox="0 0 12 12" fill="none" aria-hidden="true">
          <circle cx="6" cy="6" r="5" stroke="#d83040" strokeWidth="1.300" />
          <circle cx="4.200" cy="6" r="1.500" stroke="#333" /><circle cx="7.800" cy="6" r="1.500" stroke="#333" />
        </svg>
        <h1 className="pl-[2px]">WinOLS</h1>
        <div className="ml-auto flex items-center">
          <button type="button" aria-label="Свернуть" className="flex w-8 justify-center"><svg width="8" height="8" viewBox="0 0 8 8"><path d="M0 4.500h8" stroke="#222" /></svg></button>
          <button type="button" aria-label="Развернуть" className="flex w-8 justify-center"><svg width="8" height="8" viewBox="0 0 8 8" fill="none" stroke="#222"><path d="M.5 2.500h5v5h-5zM2.500 2V.5h5v5H6" /></svg></button>
          <button type="button" aria-label="Закрыть" className="flex w-[34px] justify-center"><svg width="8" height="8" viewBox="0 0 8 8"><path d="M0 0l8 8M8 0L0 8" stroke="#222" /></svg></button>
        </div>
      </header>
      <nav className="flex h-[15px] shrink-0 items-center gap-[10px] bg-white pl-1 text-[8px] text-[#2b3a4a]">
        {menuItems.map((item) => (
          <button key={item} type="button">{item}</button>
        ))}
      </nav>
      <Toolbars />
      <div className="flex min-h-0 flex-1">
        <SidePanel />
        <Desktop />
      </div>
      <StatusBar />
      <Taskbar />
    </div>
  )
}
